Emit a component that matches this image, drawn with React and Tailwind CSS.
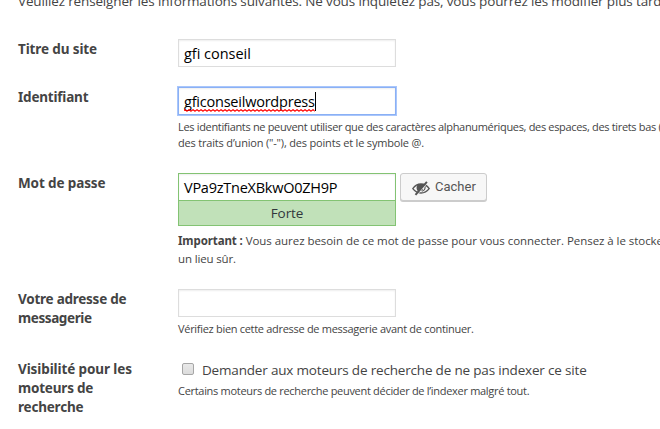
const labelFont = "font-['Noto_Sans','Open_Sans',sans-serif]";

function Row({ className, label, children }) {
  return (
    <div className={`grid grid-cols-[160px_1fr] ${className}`}>
      <div className={`mt-px text-[13.5px] leading-[19px] font-bold tracking-[-0.2px] ${labelFont}`}>{label}</div>
      <div>{children}</div>
    </div>
  );
}

function Line({ className = '', children }) {
  return <span className={`block w-max whitespace-nowrap ${className}`}>{children}</span>;
}

function Field({ className = 'border-[#ddd]', children }) {
  return (
    <div className={`flex h-7 w-[218px] items-center border bg-white pt-px pl-[5px] text-[14.5px] leading-5 text-black shadow-[inset_0_1px_2px_rgba(0,0,0,0.07)] ${className}`}>
      {children}
    </div>
  );
}

function Squiggle() {
  return (
    <svg className="absolute top-[17px] left-0 h-[3px] w-full" fill="none">
      <defs>
        <pattern id="squiggle" width="4" height="3" patternUnits="userSpaceOnUse">
          <path d="M-1 2.200 1 .6 3 2.200 5 .6" stroke="#f00" strokeWidth="1.100" />
        </pattern>
      </defs>
      <rect width="100%" height="3" fill="url(#squiggle)" />
    </svg>
  );
}

function HiddenIcon() {
  return (
    <svg className="mt-px h-[16px] w-[18px]" viewBox="0 0 18 16" fill="none" stroke="#555">
      <path d="M.8 8.6C3 5.3 6 4 9 4s6 1.300 8.200 4.600C15 11.500 12 13 9 13S3 11.500.8 8.600Z" strokeWidth="1.300" />
      <path d="M5.300 4.900C7 3.900 10.500 3.800 12.300 4.500L6.800 11.800C4.400 10.500 4 7 5.300 4.900Z" fill="#555" stroke="none" />
      <path d="M13 6.200c.6 2.600-.7 4.600-3.200 5M10.800 8.600l-1.600 1.800" strokeWidth="1.100" />
      <path d="M4.500 15.200 15.800 2.600" stroke="#f7f7f7" strokeWidth="1" />
      <path d="M3.500 14.800 14.900 1.800" strokeWidth="2" />
    </svg>
  );
}

export default function App() {
  return (
    <main className="flex h-[429px] w-[660px] flex-col overflow-hidden bg-white pl-[18px] font-['Open_Sans','Noto_Sans',sans-serif] text-[#444]">
      <div className="flex h-[39px] shrink-0">
        <p className="-mt-[9px] text-[13.5px] leading-5">
          <Line className="tracking-[-0.15px]">Veuillez renseigner les informations suivantes. Ne vous inquiétez pas, vous pourrez les modifier plus tard.</Line>
        </p>
      </div>

      <Row className="h-12 shrink-0" label={<Line className="tracking-[-0.12px]">Titre du site</Line>}>
        <Field><Line className="tracking-[-0.02px]">gfi conseil</Line></Field>
      </Row>

      <Row className="h-[86px] shrink-0" label={<Line>Identifiant</Line>}>
        <Field className="border-[#8ab0f5] outline outline-[#a9c6fb]">
          <span className="relative">
            <Line className="tracking-[-0.22px]">gficonseilwordpress</Line>
            <Squiggle />
          </span>
          <span className="h-[19px] w-px bg-black" />
        </Field>
        <div className="mt-1 text-[11px] leading-4">
          <Line className="tracking-[-0.33px]">Les identifiants ne peuvent utiliser que des caractères alphanumériques, des espaces, des tirets bas ("_"),</Line>
          <Line className="tracking-[-0.18px]">des traits d’union ("-"), des points et le symbole @.</Line>
        </div>
      </Row>

      <Row className="h-[116px] shrink-0" label={<Line className="tracking-[-0.12px]">Mot de passe</Line>}>
        <div className="flex gap-1">
          <div>
            <Field className="border-[#83c373]"><Line className="tracking-[-0.25px]">VPa9zTneXBkwO0ZH9P</Line></Field>
            <div className="-mt-px flex h-[26px] w-[218px] items-center justify-center border border-[#83c373] bg-[#c1e1b9] text-[13.5px] tracking-[-0.1px] text-[#32373c]">Forte</div>
          </div>
          <button className="flex h-7 w-[87px] items-center gap-[5px] rounded-[3px] border border-[#ccc] bg-[#f7f7f7] pl-[11px] font-['Roboto',sans-serif] text-[13px] text-[#555] shadow-[0_1px_0_#ccc]">
            <HiddenIcon />
            <span className="-mt-px">Cacher</span>
          </button>
        </div>
        <div className="mt-[6px] text-[11.5px] leading-[18px]">
          <Line className="tracking-[-0.05px]"><strong className={`tracking-[-0.1px] ${labelFont}`}>Important :</strong> Vous aurez besoin de ce mot de passe pour vous connecter. Pensez à le stocker dans</Line>
          <Line className="tracking-[-0.15px]">un lieu sûr.</Line>
        </div>
      </Row>

      <Row className="h-[71px] shrink-0" label={<><Line className="tracking-[-0.25px]">Votre adresse de</Line><Line className="tracking-[-0.4px]">messagerie</Line></>}>
        <Field />
        <div className="mt-1 text-[11px] leading-4">
          <Line className="tracking-[-0.3px]">Vérifiez bien cette adresse de messagerie avant de continuer.</Line>
        </div>
      </Row>

      <Row className="shrink-0" label={<div className="-mt-px"><Line className="tracking-[-0.1px]">Visibilité pour les</Line><Line>moteurs de</Line><Line>recherche</Line></div>}>
        <div className="flex h-5 items-center pl-1">
          <span className="-mt-[3px] size-3 shrink-0 rounded-[2px] border border-[#a6a6a6] bg-gradient-to-b from-[#e9e9e9] to-[#dcdcdc]" />
          <Line className="ml-2 text-[13.5px] leading-5 tracking-[-0.18px]">Demander aux moteurs de recherche de ne pas indexer ce site</Line>
        </div>
        <div className="mt-[3px] text-[11px] leading-4">
          <Line className="tracking-[-0.3px]">Certains moteurs de recherche peuvent décider de l’indexer malgré tout.</Line>
        </div>
      </Row>
    </main>
  );
}
